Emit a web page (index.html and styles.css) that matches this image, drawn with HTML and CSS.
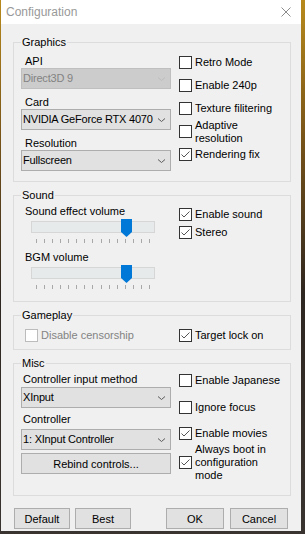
FILE: index.html
```html
<!DOCTYPE html>
<html lang="en">
<head>
  <meta charset="UTF-8">
  <title>Configuration</title>
  <link rel="stylesheet" href="styles.css">
</head>
<body>
  <div class="window">
    <div class="titlebar">
      <span class="title">Configuration</span>
      <svg class="close" width="10" height="10" viewBox="0 0 10 10"><path d="M0.5 0.5L9.5 9.5M9.5 0.5L0.5 9.5" stroke="#8c8c8c" stroke-width="1" fill="none"/></svg>
    </div>

    <div class="content">
      <fieldset class="group graphics">
        <legend>Graphics</legend>
        <div class="cols">
          <div class="fields">
            <div class="field">
              <div class="label">API</div>
              <div class="select disabled"><span>Direct3D 9</span><svg width="7" height="4" viewBox="0 0 7 4"><path d="M0 0.5L3.5 3.5L7 0.5" stroke="#bdbdbd" fill="none"/></svg></div>
            </div>
            <div class="field">
              <div class="label">Card</div>
              <div class="select"><span>NVIDIA GeForce RTX 4070</span><svg width="7" height="4" viewBox="0 0 7 4"><path d="M0 0.5L3.5 3.5L7 0.5" stroke="#5a5a5a" fill="none"/></svg></div>
            </div>
            <div class="field">
              <div class="label">Resolution</div>
              <div class="select"><span>Fullscreen</span><svg width="7" height="4" viewBox="0 0 7 4"><path d="M0 0.5L3.5 3.5L7 0.5" stroke="#5a5a5a" fill="none"/></svg></div>
            </div>
          </div>
          <div class="checks gfx">
            <label class="check"><span class="box"></span>Retro Mode</label>
            <label class="check"><span class="box"></span>Enable 240p</label>
            <label class="check"><span class="box"></span>Texture filitering</label>
            <label class="check"><span class="box"></span>Adaptive<br>resolution</label>
            <label class="check"><span class="box"><svg width="11" height="11" viewBox="0 0 11 11"><path d="M1.5 5.5L4 8L9.5 2.5" stroke="#555" fill="none"/></svg></span>Rendering fix</label>
          </div>
        </div>
      </fieldset>

      <fieldset class="group sound">
        <legend>Sound</legend>
        <div class="cols">
          <div class="fields">
            <div class="label">Sound effect volume</div>
            <div class="slider">
              <div class="track">
                <svg class="thumb" width="11" height="18" viewBox="0 0 11 18"><path d="M0 0H11V13L5.5 18L0 13Z" fill="#0078d7"/></svg>
              </div>
              <div class="ticks"><i></i><i></i><i></i><i></i><i></i><i></i><i></i><i></i><i></i><i></i><i></i><i></i><i></i><i></i><i></i></div>
            </div>
            <div class="label next">BGM volume</div>
            <div class="slider">
              <div class="track">
                <svg class="thumb" width="11" height="18" viewBox="0 0 11 18"><path d="M0 0H11V13L5.5 18L0 13Z" fill="#0078d7"/></svg>
              </div>
              <div class="ticks"><i></i><i></i><i></i><i></i><i></i><i></i><i></i><i></i><i></i><i></i><i></i><i></i><i></i><i></i><i></i></div>
            </div>
          </div>
          <div class="checks snd">
            <label class="check"><span class="box"><svg width="11" height="11" viewBox="0 0 11 11"><path d="M1.5 5.5L4 8L9.5 2.5" stroke="#555" fill="none"/></svg></span>Enable sound</label>
            <label class="check"><span class="box"><svg width="11" height="11" viewBox="0 0 11 11"><path d="M1.5 5.5L4 8L9.5 2.5" stroke="#555" fill="none"/></svg></span>Stereo</label>
          </div>
        </div>
      </fieldset>

      <fieldset class="group gameplay">
        <legend>Gameplay</legend>
        <div class="cols">
          <label class="check off"><span class="box"></span>Disable censorship</label>
          <label class="check"><span class="box"><svg width="11" height="11" viewBox="0 0 11 11"><path d="M1.5 5.5L4 8L9.5 2.5" stroke="#555" fill="none"/></svg></span>Target lock on</label>
        </div>
      </fieldset>

      <fieldset class="group misc">
        <legend>Misc</legend>
        <div class="cols">
          <div class="fields">
            <div class="label">Controller input method</div>
            <div class="select"><span>XInput</span><svg width="7" height="4" viewBox="0 0 7 4"><path d="M0 0.5L3.5 3.5L7 0.5" stroke="#5a5a5a" fill="none"/></svg></div>
            <div class="label next">Controller</div>
            <div class="select"><span>1: XInput Controller</span><svg width="7" height="4" viewBox="0 0 7 4"><path d="M0 0.5L3.5 3.5L7 0.5" stroke="#5a5a5a" fill="none"/></svg></div>
            <button class="btn rebind">Rebind controls...</button>
          </div>
          <div class="checks msc">
            <label class="check"><span class="box"></span>Enable Japanese</label>
            <label class="check"><span class="box"></span>Ignore focus</label>
            <label class="check"><span class="box"><svg width="11" height="11" viewBox="0 0 11 11"><path d="M1.5 5.5L4 8L9.5 2.5" stroke="#555" fill="none"/></svg></span>Enable movies</label>
            <label class="check"><span class="box"><svg width="11" height="11" viewBox="0 0 11 11"><path d="M1.5 5.5L4 8L9.5 2.5" stroke="#555" fill="none"/></svg></span>Always boot in<br>configuration<br>mode</label>
          </div>
        </div>
      </fieldset>
    </div>

    <div class="footer">
      <div class="btn-group">
        <button class="btn small">Default</button>
        <button class="btn small">Best</button>
      </div>
      <div class="btn-group wide">
        <button class="btn">OK</button>
        <button class="btn">Cancel</button>
      </div>
    </div>
  </div>
</body>
</html>
```

FILE: styles.css
```css
* {
  box-sizing: border-box;
}
body {
  margin: 0;
  height: 534px;
  overflow: hidden;
  background: linear-gradient(to bottom, #b88a1c 0%, #7a5518 25%, #2e2620 55%, #3a3430 100%);
  font-family: "Liberation Sans", Arial, sans-serif;
  font-size: 11px;
  line-height: 13px;
  color: #000;
}
.window {
  width: 300px;
  height: 531px;
  margin-left: 1px;
  background: #f0f0f0;
  display: flex;
  flex-direction: column;
}
.titlebar {
  height: 24px;
  background: #fff;
  display: flex;
  align-items: center;
  justify-content: space-between;
  padding: 0 10px 0 5px;
}
.title {
  font-size: 12px;
  color: #999;
}
.content {
  padding: 12px 10px 0 12px;
  display: flex;
  flex-direction: column;
  gap: 7px;
}
.group {
  margin: 0;
  min-width: 0;
  border: 1px solid #dcdcdc;
  padding: 3px 0 0 7px;
}
.group legend {
  padding: 0 1px;
  line-height: 13px;
}
.cols {
  display: grid;
  grid-template-columns: 150px 1fr;
  column-gap: 8px;
}
.label {
  padding-left: 4px;
  height: 13px;
  white-space: nowrap;
}

/* selects */
.select {
  height: 21px;
  background: #e1e1e1;
  border: 1px solid #adadad;
  display: flex;
  align-items: center;
  justify-content: space-between;
  padding: 0 5px 0 1px;
  white-space: nowrap;
}
.select span {
  letter-spacing: -0.2px;
}
.select svg {
  flex: none;
}
.select.disabled {
  background: #cccccc;
  border-color: #bfbfbf;
  color: #838383;
}

/* checkboxes */
.check {
  display: flex;
  align-items: center;
  white-space: nowrap;
}
.box {
  width: 13px;
  height: 13px;
  flex: none;
  border: 1px solid #333;
  background: #fff;
  margin-right: 3px;
}
.box svg {
  display: block;
}
.check.off {
  color: #838383;
  padding-left: 4px;
}
.check.off .box {
  border-color: #bcbcbc;
}

/* graphics */
.graphics {
  padding-bottom: 10px;
}
.graphics .fields {
  padding-top: 3px;
  display: flex;
  flex-direction: column;
  gap: 7px;
}
.gfx {
  margin-top: -1px;
}
.gfx .check {
  height: 23px;
}

/* sound */
.sound {
  padding-bottom: 12px;
}
.slider {
  margin-top: 3px;
  padding-left: 10px;
  width: 134px;
}
.track {
  position: relative;
  height: 12px;
  background: #e7eaea;
  border: 1px solid #d6d6d6;
}
.thumb {
  position: absolute;
  left: 89px;
  top: -3px;
}
.ticks {
  margin: 6px 5px 0 5px;
  height: 4px;
  display: flex;
  justify-content: space-between;
}
.ticks i {
  width: 1px;
  height: 4px;
  background: #a8a8a8;
}
.sound .label.next {
  margin-top: 8px;
}
.snd .check {
  height: 18px;
}

/* gameplay */
.gameplay {
  padding-top: 2px;
  padding-bottom: 2px;
}
.gameplay .check {
  height: 23px;
}

/* misc */
.misc {
  padding-bottom: 13px;
}
.misc .label {
  padding-left: 2px;
}
.misc .select {
  margin-top: 1px;
}
.misc .label.next {
  margin-top: 5px;
}
.misc .label.next + .select {
  margin-top: 3px;
}
.msc .check {
  margin-top: 14px;
}
.msc .check:first-child {
  margin-top: 1px;
}
.msc .check:nth-child(3) {
  margin-top: 13px;
}
.msc .check:last-child {
  margin-top: 3px;
}

/* buttons */
.btn {
  font-family: inherit;
  font-size: 11px;
  height: 21px;
  background: #e1e1e1;
  border: 1px solid #adadad;
  color: #000;
  padding: 0;
}
.rebind {
  margin-top: 3px;
  width: 150px;
}
.footer {
  margin-top: 12px;
  padding: 0 13px;
  display: flex;
  justify-content: space-between;
}
.btn-group {
  display: flex;
  gap: 5px;
}
.btn-group .btn {
  width: 56px;
}
.btn-group.wide {
  gap: 6px;
}
.btn-group.wide .btn {
  width: 58px;
}
```
